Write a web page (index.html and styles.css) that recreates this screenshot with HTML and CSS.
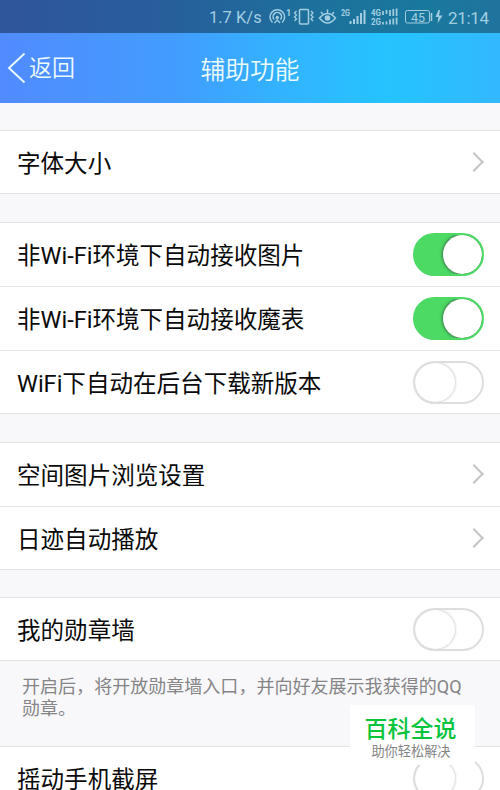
FILE: index.html
```html
<!DOCTYPE html>
<html lang="zh-CN">
<head>
<meta charset="utf-8">
<title>辅助功能</title>
<link rel="stylesheet" href="styles.css">
</head>
<body>
<div class="status">
  <span class="speed">1.7 K/s</span>
  <svg class="status-icons" width="232" height="33" viewBox="268 0 232 33" fill="none" stroke="currentColor" stroke-width="1.500">
    <path d="M272.500 22.500a7.300 7.300 0 1 1 9.600 0M274.200 19.500a4.200 4.200 0 1 1 6.200 0"/>
    <circle cx="277.300" cy="17.500" r="1.700" fill="currentColor" stroke="none"/>
    <path d="M274.500 23l2.800-3 2.800 3" stroke-width="1.200"/>
    <text class="tiny" x="286" y="16" font-size="9">1</text>
    <rect x="299.500" y="9.500" width="9" height="14.500" rx="1"/>
    <path d="M296.500 11l-2 2 2 2-2 2 2 2-2 2M311 11l2 2-2 2 2 2-2 2 2 2" stroke-width="1.300"/>
    <path d="M319.500 18q8-9 16 0q-8 10-16 0zM321 12l2 2.500M327.500 9.500v3.500M334 12l-2 2.500"/>
    <circle cx="327.500" cy="18" r="2.800" fill="currentColor" stroke="none"/>
    <text class="tiny" x="341" y="16" font-size="9" textLength="9" lengthAdjust="spacingAndGlyphs">2G</text>
    <path d="M350.500 21v3M354 19v5M357.500 16v8M361 13v11M364.500 10v14" stroke-width="2"/>
    <text class="tiny" x="371" y="16" font-size="9" textLength="10" lengthAdjust="spacingAndGlyphs">4G</text>
    <text class="tiny" x="371" y="25" font-size="9" textLength="10" lengthAdjust="spacingAndGlyphs">2G</text>
    <path d="M383 11v4M386.500 10v4M390 10v6M393.300 9v7M396.600 8.500v7.500M383 22v2.500M386.500 21.500v3M390 19.500v5M393.300 18.500v6M396.600 17.500v7" stroke-width="1.700"/>
    <rect x="405.500" y="10.500" width="24" height="12.500" rx="2" stroke-width="1"/>
    <path d="M431.500 13v8" stroke-width="1.600"/>
    <text class="battery" x="411" y="21.500" font-size="12.500">45</text>
    <path d="M438.500 10l-3 7h3l-1 6.500 5-8h-3.500l1-5.500z" fill="currentColor" stroke="none"/>
    <text class="clock" x="448" y="23.500" font-size="17" textLength="41">21:14</text>
  </svg>
</div>
<header class="navbar">
  <a class="back">
    <svg width="20" height="34" viewBox="0 0 20 34"><path d="M17.500 2.500L2 17l15.500 14.500" fill="none" stroke="currentColor" stroke-width="1.900"/></svg>
    <span>返回</span>
  </a>
  <h1>辅助功能</h1>
</header>
<main>
  <section class="group">
    <div class="row"><span>字体大小</span><i class="chevron"></i></div>
  </section>
  <section class="group">
    <div class="row"><span>非Wi-Fi环境下自动接收图片</span><i class="switch on"></i></div>
    <div class="row"><span>非Wi-Fi环境下自动接收魔表</span><i class="switch on"></i></div>
    <div class="row"><span>WiFi下自动在后台下载新版本</span><i class="switch"></i></div>
  </section>
  <section class="group">
    <div class="row"><span>空间图片浏览设置</span><i class="chevron"></i></div>
    <div class="row"><span>日迹自动播放</span><i class="chevron"></i></div>
  </section>
  <section class="group medal">
    <div class="row"><span>我的勋章墙</span><i class="switch"></i></div>
  </section>
  <p class="note">开启后，将开放勋章墙入口，并向好友展示我获得的QQ<br>勋章。</p>
  <section class="group shake">
    <div class="row"><span>摇动手机截屏</span><i class="switch"></i></div>
  </section>
</main>
<aside class="badge"><strong>百科全说</strong><small>助你轻松解决</small></aside>
</body>
</html>
```
FILE: styles.css
```css
* { box-sizing: border-box; }
body {
  margin: 0;
  height: 790px;
  overflow: hidden;
  position: relative;
  background: #f8f8fa;
  color: #0a0a0a;
  font-family: Roboto, "Noto Sans CJK SC", sans-serif;
}
.status {
  height: 33px;
  display: flex;
  justify-content: flex-end;
  align-items: center;
  color: #a3cee2;
  background: linear-gradient(90deg, #30559b, #265f9b 35%, #1c729c 65%, #19789d 85%, #20739d);
}
.speed { width: 59px; font-size: 16.500px; line-height: 33px; padding-top: 1px; white-space: nowrap; }
.status-icons { display: block; }
.status-icons text { fill: currentColor; stroke: none; font-family: Roboto, sans-serif; }
.status-icons .tiny { font-weight: 700; }
.navbar {
  height: 70px;
  display: grid;
  grid-template-columns: 150px 200px 150px;
  align-items: center;
  color: #ecfbff;
  font-weight: 350;
  background: linear-gradient(90deg, #518bff, #429cff 35%, #33b2ff 55%, #25c3ff 78%, #32b8ff);
}
.back { display: flex; align-items: center; gap: 2px; padding-left: 7px; font-size: 23px; line-height: 34px; }
.back span { padding-top: 2px; }
.navbar h1 { margin: 0; padding-top: 5px; text-align: center; font-size: 24.700px; font-weight: 350; line-height: 36px; }
.group { margin-top: 28px; background: #fff; border-bottom: 1px solid #e3e3e5; }
main { padding-top: 27px; }
.group:first-child { margin-top: 0; }
.group.medal { margin-top: 27px; }
.row {
  height: 64px;
  border-top: 1px solid #e3e3e5;
  display: flex;
  justify-content: space-between;
  align-items: center;
  padding: 0 16px 1px 17px;
  font-size: 23.550px;
  line-height: 34px;
  white-space: nowrap;
}
.row span { padding-top: 4px; }
.row:last-child { height: 63px; padding-bottom: 0; }
.chevron {
  width: 14px;
  height: 14px;
  margin-right: 3px;
  border: solid #c4c4c6;
  border-width: 2px 2px 0 0;
  transform: rotate(45deg);
}
.switch {
  width: 71px;
  height: 43px;
  border-radius: 22px;
  border: 2px solid #dedede;
  background: #fff;
  display: flex;
  overflow: hidden;
}
.switch::before {
  content: "";
  width: 40px;
  height: 39px;
  border-radius: 50%;
  background: #fff;
  box-shadow: 0 0 3px rgba(0, 0, 0, .32);
}
.switch.on { background: #4cd964; border-color: #4cd964; justify-content: flex-end; }
.switch.on::before { width: 39px; box-shadow: 0 0 3px 1px rgba(60, 80, 70, .7); }
.note { margin: 0; height: 85px; padding: 15px 22px 0; font-size: 18.050px; line-height: 22px; color: #858587; }
.group.shake { margin-top: 0; }
.badge {
  position: absolute;
  left: 350px;
  top: 705px;
  width: 125px;
  height: 60px;
  display: flex;
  flex-direction: column;
  align-items: center;
  background: #fff;
}
.badge strong { margin-top: 11px; margin-right: 4px; color: #08c43c; font-size: 23px; line-height: 28px; font-weight: 500; }
.badge small { margin-right: 3px; color: #858585; font-size: 13.200px; line-height: 15px; }
```
